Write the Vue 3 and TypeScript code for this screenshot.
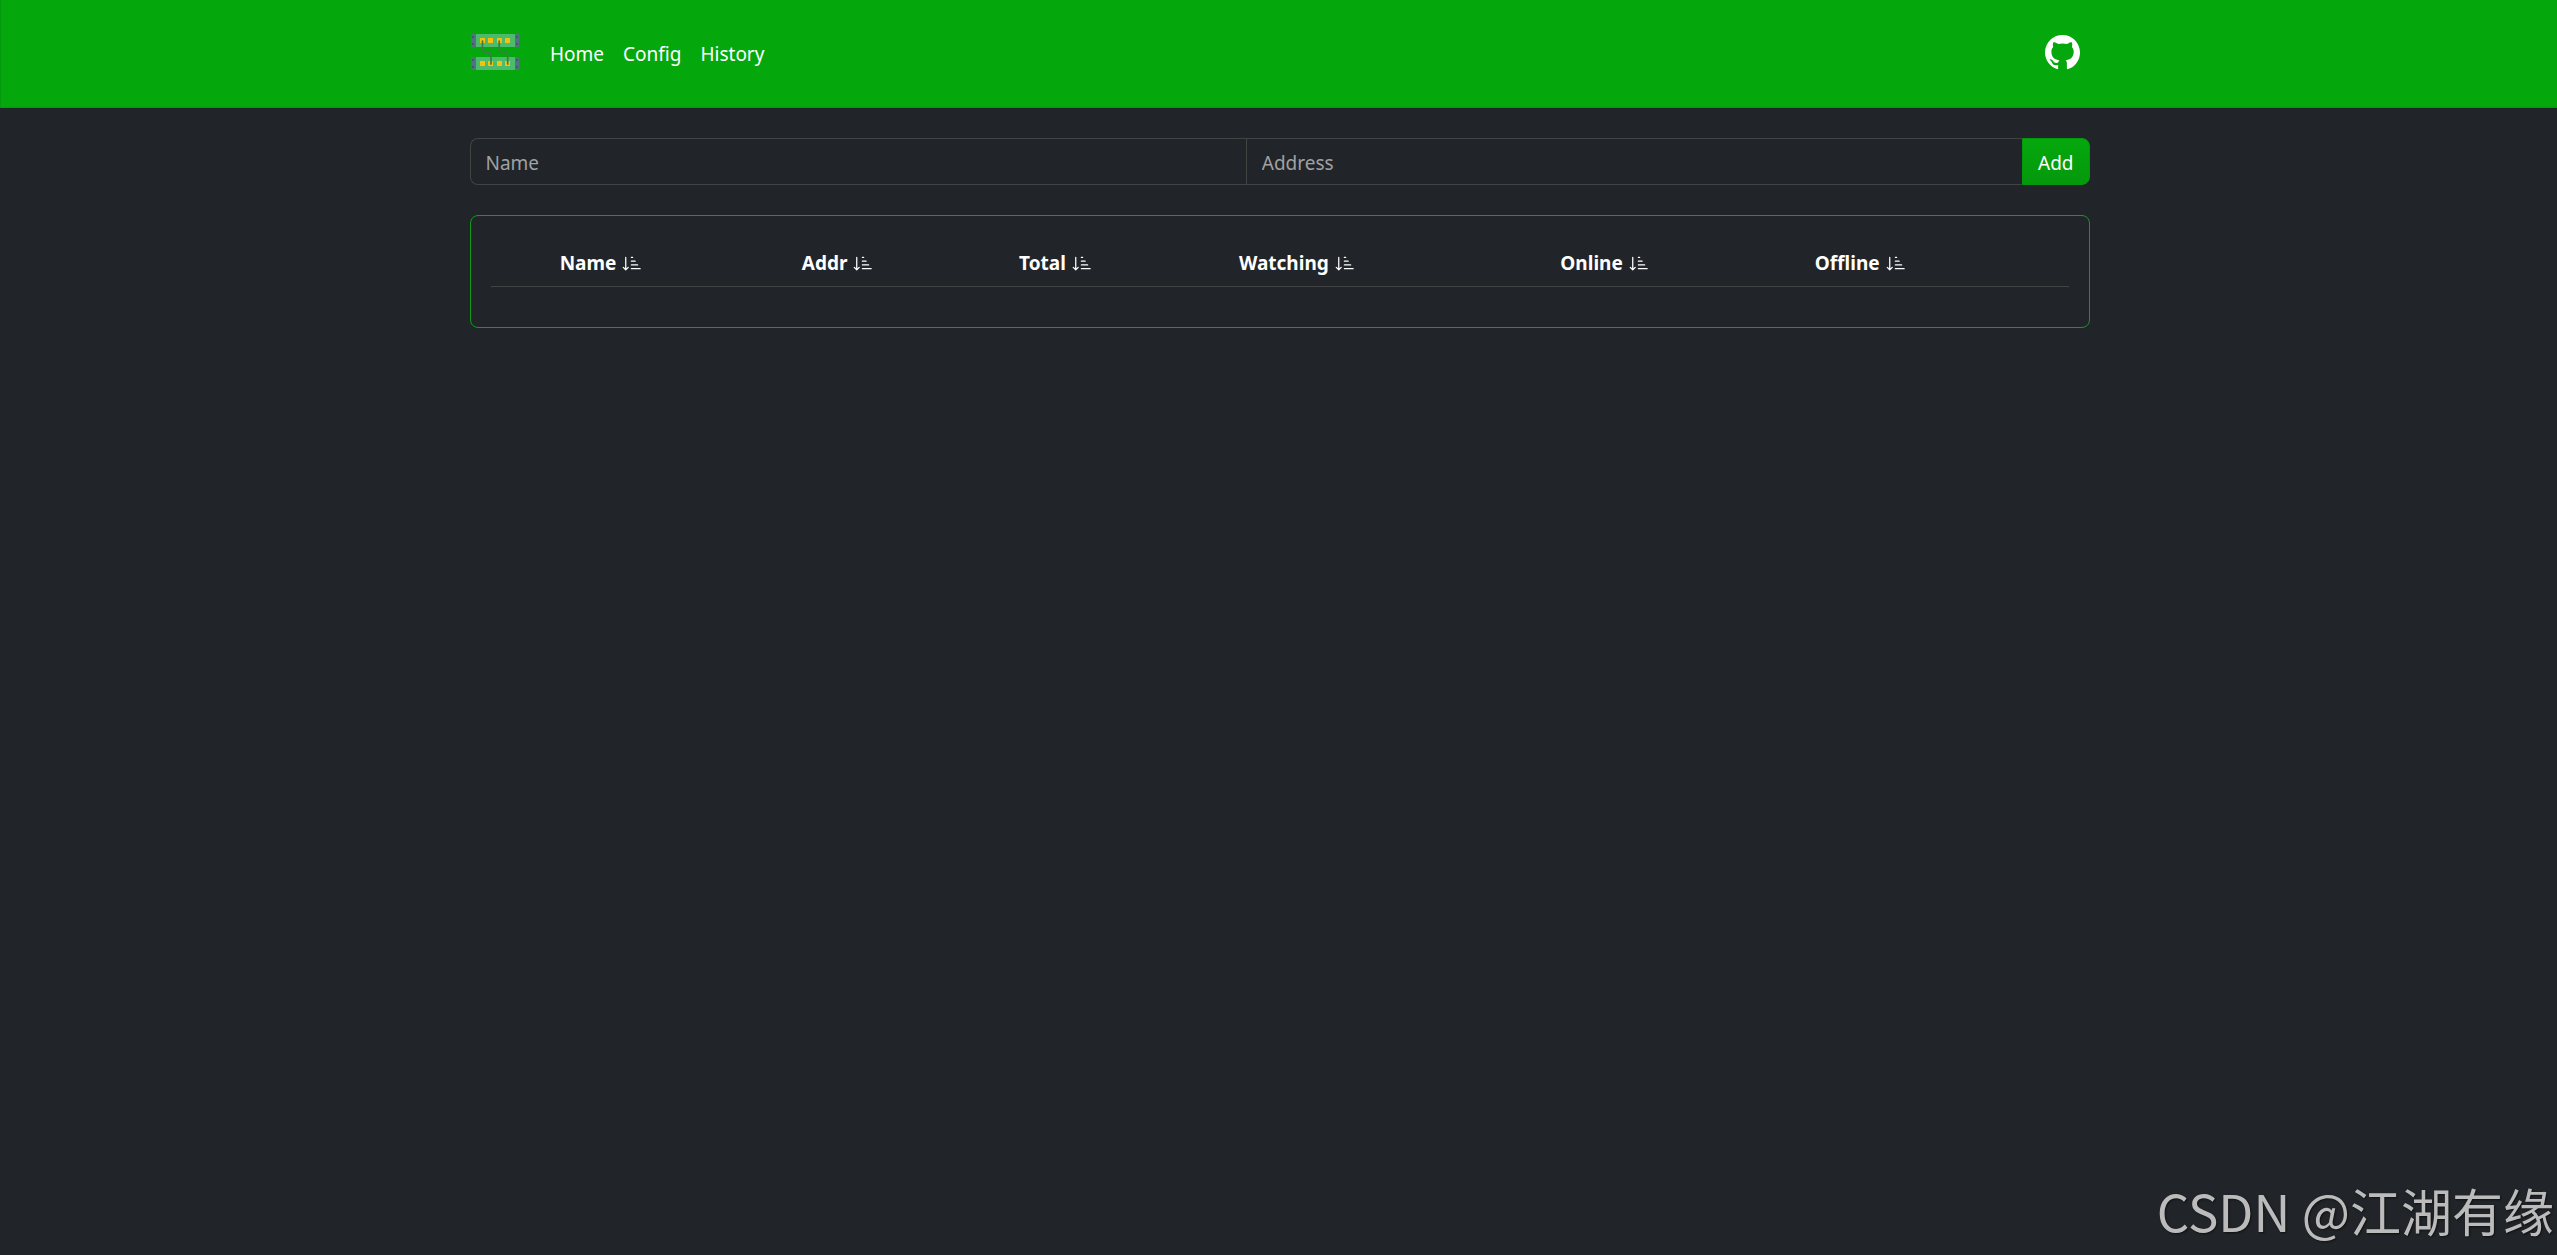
<script setup lang="ts">
import { ref } from 'vue'

interface Column {
  key: string
  label: string
  width: number
}

const links: string[] = ['Home', 'Config', 'History']

const columns: Column[] = [
  { key: 'name', label: 'Name', width: 14 },
  { key: 'addr', label: 'Addr', width: 16 },
  { key: 'total', label: 'Total', width: 11.6 },
  { key: 'watching', label: 'Watching', width: 19 },
  { key: 'online', label: 'Online', width: 20 },
  { key: 'offline', label: 'Offline', width: 12.4 },
]

const name = ref('')
const address = ref('')
</script>

<template>
  <div class="page">
    <header class="navbar">
      <div class="container nav-row">
        <a href="#" class="brand" aria-label="Home page">
          <svg class="logo" viewBox="0 0 50 50" aria-hidden="true">
            <g v-for="y in [7, 30]" :key="y">
              <rect x="1" :y="y" width="48" height="13" fill="#53727f" />
              <rect x="6" :y="y" width="39" height="13" fill="#4cbb6c" />
              <g fill="#35565f">
                <circle cx="3" :cy="y + 3" r="1" />
                <circle cx="3" :cy="y + 10" r="1" />
                <circle cx="47" :cy="y + 3" r="1" />
                <circle cx="47" :cy="y + 10" r="1" />
              </g>
              <rect v-for="x in [10, 18, 27, 35]" :key="x" :x="x" :y="y + 4" width="5" height="5" fill="#f4c20d" />
            </g>
            <g fill="none" stroke="#3c7d45" stroke-width="1.7" stroke-linecap="round">
              <path d="M12.500 14v8q0 3 3 3h2.500q3 0 3 3v9" />
              <path d="M29.200 14v8q0 3 3 3h2.500q3 0 3 3v9" />
            </g>
          </svg>
        </a>
        <nav class="links">
          <a v-for="link in links" :key="link" href="#">{{ link }}</a>
        </nav>
        <a href="#" class="github" aria-label="GitHub">
          <svg viewBox="0 0 16 16" fill="currentColor" aria-hidden="true">
            <path d="M8 0C3.58 0 0 3.58 0 8c0 3.54 2.29 6.53 5.47 7.59.4.07.55-.17.55-.38 0-.19-.01-.82-.01-1.49-2.01.37-2.53-.49-2.69-.94-.09-.23-.48-.94-.82-1.13-.28-.15-.68-.52-.01-.53.63-.01 1.08.58 1.23.82.72 1.21 1.87.87 2.33.66.07-.52.28-.87.51-1.07-1.78-.2-3.64-.89-3.64-3.95 0-.87.31-1.59.82-2.15-.08-.2-.36-1.02.08-2.12 0 0 .67-.21 2.2.82.64-.18 1.32-.27 2-.27s1.36.09 2 .27c1.53-1.04 2.2-.82 2.2-.82.44 1.1.16 1.92.08 2.12.51.56.82 1.27.82 2.15 0 3.07-1.87 3.75-3.65 3.95.29.25.54.73.54 1.48 0 1.07-.01 1.93-.01 2.2 0 .21.15.46.55.38A8.01 8.01 0 0 0 16 8c0-4.42-3.58-8-8-8" />
          </svg>
        </a>
      </div>
    </header>

    <main class="container">
      <form class="add-host" @submit.prevent>
        <input v-model="name" type="text" placeholder="Name" aria-label="Name" />
        <input v-model="address" type="text" placeholder="Address" aria-label="Address" />
        <button type="submit">Add</button>
      </form>

      <section class="card">
        <table>
          <colgroup>
            <col v-for="column in columns" :key="column.key" :style="{ width: column.width + '%' }" />
            <col />
          </colgroup>
          <thead>
            <tr>
              <th v-for="column in columns" :key="column.key" scope="col">
                {{ column.label }}
                <svg class="sort" viewBox="0 0 16 16" fill="currentColor" aria-hidden="true">
                  <path d="M3.500 3.500a.5.5 0 0 0-1 0v8.793l-1.146-1.147a.5.5 0 0 0-.708.708l2 1.999.007.007a.497.497 0 0 0 .7-.006l2-2a.5.5 0 0 0-.707-.708L3.500 12.293zm4 .5a.5.5 0 0 1 0-1h1a.5.5 0 0 1 0 1zm0 3a.5.5 0 0 1 0-1h3a.5.5 0 0 1 0 1zm0 3a.5.5 0 0 1 0-1h5a.5.5 0 0 1 0 1zM7 12.500a.5.5 0 0 0 .5.5h7a.5.5 0 0 0 0-1h-7a.5.5 0 0 0-.5.5" />
                </svg>
              </th>
              <td></td>
            </tr>
          </thead>
          <tbody></tbody>
        </table>
      </section>
    </main>

    <div class="watermark">CSDN @江湖有缘</div>
  </div>
</template>

<style>
body {
  background: #212529;
}
</style>

<style scoped>
.page {
  position: relative;
  min-height: 100vh;
  color: #fff;
  font-family: 'Noto Sans', 'Open Sans', sans-serif;
  font-size: 19px;
  line-height: 30px;
}

.page *,
.page {
  box-sizing: border-box;
}

a {
  color: inherit;
  text-decoration: none;
}

.container {
  width: 100%;
  max-width: 1650px;
  margin: 0 auto;
  padding: 0 14px 0 16px;
}

.navbar {
  padding: 27px 0 30px;
  background: #04a80d;
  border: 1px solid #049a0c;
  border-top: 0;
  border-right: 0;
}

.nav-row {
  display: flex;
  align-items: center;
}

.brand {
  display: flex;
  margin-right: 30px;
}

.logo {
  width: 50px;
  height: 50px;
}

.links {
  display: flex;
  gap: 19px;
  flex: 1;
  padding-top: 4px;
}

.github {
  display: flex;
  margin-right: 10px;
}

.github svg {
  width: 35px;
  height: 35px;
}

.add-host {
  display: flex;
  margin: 30px 0;
}

input,
button {
  height: 47px;
  padding: 2px 15px 0;
  color: #fff;
  font: inherit;
}

input {
  flex: 1;
  min-width: 0;
  background: #212529;
  border: 1px solid #434343;
  border-right: 0;
  border-radius: 0;
}

input:first-child {
  border-radius: 8px 0 0 8px;
}

input::placeholder {
  color: #a0a1a2;
  opacity: 1;
}

button {
  background: linear-gradient(#04a80d, #04990c);
  border: 1px solid #04990c;
  border-radius: 0 8px 8px 0;
}

.card {
  padding: 20px;
  border: 1px solid #139b18;
  border-radius: 8px;
}

table {
  width: 100%;
  margin-bottom: 20px;
  table-layout: fixed;
  border-collapse: collapse;
}

th,
td {
  height: 50px;
  padding: 12px 10px 8px;
  border-bottom: 1px solid #434343;
}

th {
  font-weight: 700;
  text-align: center;
  white-space: nowrap;
}

.sort {
  width: 20px;
  height: 20px;
  margin-left: 1px;
  vertical-align: -3px;
}

.watermark {
  position: absolute;
  right: 3px;
  bottom: 9px;
  color: #bbb;
  font-family: 'Noto Sans CJK SC', sans-serif;
  font-size: 51px;
  line-height: 72px;
  text-shadow: 1px 1px 2px #111;
  pointer-events: none;
}
</style>
